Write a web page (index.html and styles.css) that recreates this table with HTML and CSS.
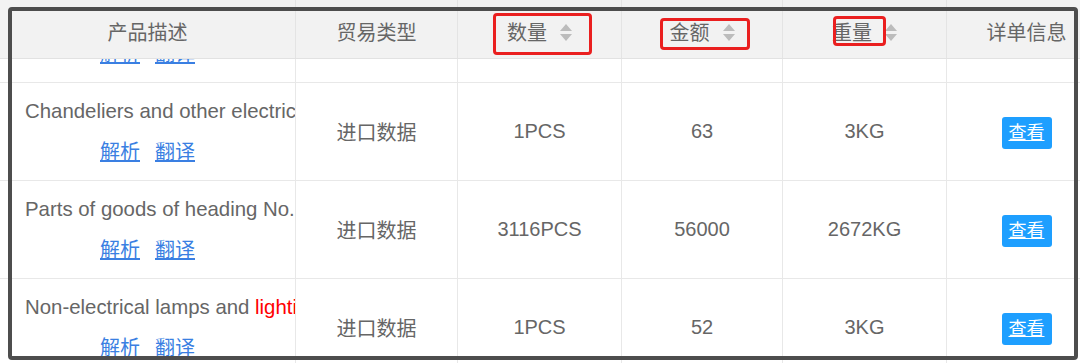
FILE: index.html
```html
<!DOCTYPE html>
<html lang="zh">
<head>
<meta charset="utf-8">
<title>数据列表</title>
<link rel="stylesheet" href="styles.css">
</head>
<body>
<div class="page">
  <div class="table">
    <div class="thead grid">
      <div class="th">产品描述</div>
      <div class="th">贸易类型</div>
      <div class="th"><span>数量</span><svg class="sort" width="12" height="17" viewBox="0 0 12 17"><path d="M6 0 L12 7 L0 7 Z M0 10 L12 10 L6 17 Z" fill="#bcbcbc"/></svg></div>
      <div class="th"><span>金额</span><svg class="sort" width="12" height="17" viewBox="0 0 12 17"><path d="M6 0 L12 7 L0 7 Z M0 10 L12 10 L6 17 Z" fill="#bcbcbc"/></svg></div>
      <div class="th"><span>重量</span><svg class="sort" width="12" height="17" viewBox="0 0 12 17"><path d="M6 0 L12 7 L0 7 Z M0 10 L12 10 L6 17 Z" fill="#bcbcbc"/></svg></div>
      <div class="th">详单信息</div>
    </div>
    <div class="tbody">
      <div class="tr grid first">
        <div class="td desc"><div class="en">Lamps and lighting fittings</div><div class="links"><a href="#">解析</a><a href="#">翻译</a></div></div>
        <div class="td">进口数据</div>
        <div class="td">1PCS</div>
        <div class="td">40</div>
        <div class="td">2KG</div>
        <div class="td"><a class="btn" href="#">查看</a></div>
      </div>
      <div class="tr grid">
        <div class="td desc"><div class="en">Chandeliers and other electric ceiling or wall lighting fittings</div><div class="links"><a href="#">解析</a><a href="#">翻译</a></div></div>
        <div class="td">进口数据</div>
        <div class="td">1PCS</div>
        <div class="td">63</div>
        <div class="td">3KG</div>
        <div class="td"><a class="btn" href="#">查看</a></div>
      </div>
      <div class="tr grid">
        <div class="td desc"><div class="en">Parts of goods of heading No. 94.05</div><div class="links"><a href="#">解析</a><a href="#">翻译</a></div></div>
        <div class="td">进口数据</div>
        <div class="td">3116PCS</div>
        <div class="td">56000</div>
        <div class="td">2672KG</div>
        <div class="td"><a class="btn" href="#">查看</a></div>
      </div>
      <div class="tr grid">
        <div class="td desc"><div class="en">Non-electrical lamps and <span class="hl">lighting</span> fittings</div><div class="links"><a href="#">解析</a><a href="#">翻译</a></div></div>
        <div class="td">进口数据</div>
        <div class="td">1PCS</div>
        <div class="td">52</div>
        <div class="td">3KG</div>
        <div class="td"><a class="btn" href="#">查看</a></div>
      </div>
    </div>
  </div>
  <div class="frame"></div>
  <div class="mark mark-qty"></div>
  <div class="mark mark-amt"></div>
  <div class="mark mark-wt"></div>
</div>
</body>
</html>
```

FILE: styles.css
```css
* { box-sizing: border-box; }
html, body { margin: 0; padding: 0; }
body {
  width: 1080px;
  height: 363px;
  overflow: hidden;
  background: #fff;
  font-family: "Liberation Sans", "Noto Sans CJK SC", sans-serif;
  color: #666;
}
.page {
  position: relative;
  width: 1080px;
  height: 363px;
  overflow: hidden;
}
.table {
  width: 1107px;
}
.grid {
  display: grid;
  grid-template-columns: 296px 162px 164px 161px 164px 160px;
}
.thead {
  position: relative;
  z-index: 2;
  height: 59px;
  background: #f2f2f2;
  border-bottom: 1px solid #e2e2e2;
}
.th {
  display: flex;
  align-items: center;
  justify-content: center;
  gap: 13px;
  padding-top: 4px;
  font-size: 20px;
  color: #666;
  border-right: 1px solid #e4e4e4;
}
.sort { display: block; margin-top: 2px; }
.tbody {
  height: 304px;
  overflow: hidden;
}
.tr {
  height: 98px;
  border-bottom: 1px solid #e8e8e8;
}
.tr.first { margin-top: -74px; }
.td {
  display: flex;
  align-items: center;
  justify-content: center;
  font-size: 20px;
  color: #666;
  border-right: 1px solid #e8e8e8;
}
.td.desc {
  display: block;
  padding: 17px 0 0 25px;
  overflow: hidden;
}
.en {
  white-space: nowrap;
  line-height: 22px;
  font-size: 20.4px;
  color: #666;
}
.hl { color: #f00; }
.links {
  margin-top: 19px;
  margin-left: -25px;
  line-height: 22px;
  display: flex;
  justify-content: center;
  gap: 15px;
}
.links a {
  color: #3a7fe2;
  text-decoration: underline;
  font-size: 20px;
}
.btn {
  display: inline-block;
  width: 50px;
  height: 32px;
  line-height: 32px;
  text-align: center;
  background: #1e9fff;
  color: #fff;
  border-radius: 3px;
  font-size: 18px;
  text-decoration: underline;
  margin-top: 3px;
}
.frame {
  position: absolute;
  left: 8px;
  top: 7px;
  width: 1070px;
  height: 353px;
  border: 4px solid #4d4d4d;
  border-radius: 4px;
  z-index: 5;
  pointer-events: none;
}
.mark {
  position: absolute;
  border: 3px solid #ea1f1f;
  border-radius: 4px;
  z-index: 6;
}
.mark-qty { left: 493px; top: 13px; width: 99px; height: 42px; }
.mark-amt { left: 660px; top: 18px; width: 90px; height: 32px; }
.mark-wt { left: 833px; top: 16px; width: 53px; height: 30px; }
```
